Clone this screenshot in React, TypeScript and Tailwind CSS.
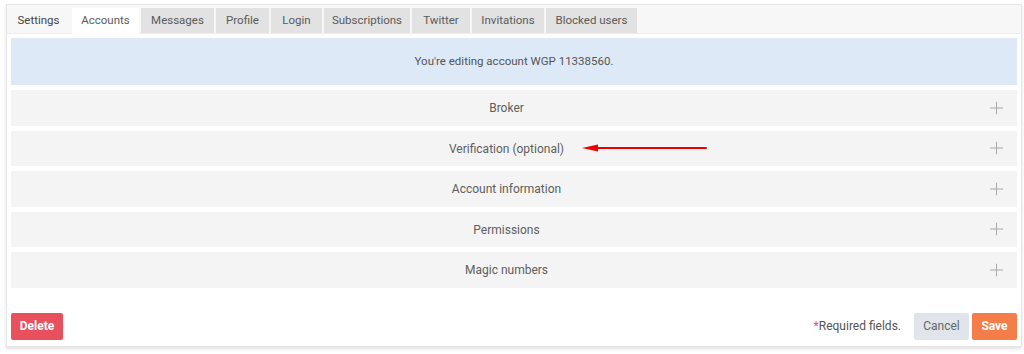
import React from "react";

const tabs = [
  { label: "Settings", kind: "plain", w: "w-[63px]" },
  { label: "Accounts", kind: "active", w: "w-[67px]" },
  { label: "Messages", kind: "gray", w: "w-[73px]" },
  { label: "Profile", kind: "gray", w: "w-[53px]" },
  { label: "Login", kind: "gray", w: "w-[51px]" },
  { label: "Subscriptions", kind: "gray", w: "w-[86px]" },
  { label: "Twitter", kind: "gray", w: "w-[58px]" },
  { label: "Invitations", kind: "gray", w: "w-[72px]" },
  { label: "Blocked users", kind: "gray", w: "w-[91px]" },
];

const rows = ["Broker", "Verification (optional)", "Account information", "Permissions", "Magic numbers"];

function Plus() {
  return (
    <svg width="13" height="13" viewBox="0 0 13 13" className="block">
      <path d="M6.5 0V13M0 6.5H13" stroke="#a8a8a8" strokeWidth="1" fill="none" />
    </svg>
  );
}

export default function App() {
  return (
    <div className="w-[1024px] h-[354px] bg-white pt-[4px] pl-[6px]" style={{ fontFamily: "Roboto, 'Liberation Sans', sans-serif" }}>
      <div className="w-[1016px] border border-[#e6e6e6] bg-white shadow-[0_2px_3px_rgba(0,0,0,0.12)]">
        <div className="flex items-end gap-[2px] h-[29px] bg-[#f7f7f7] border-b border-[#ececec]">
          {tabs.map((t) => (
            <div
              key={t.label}
              className={
                t.w +
                " h-[25px] flex items-center justify-center text-[11.5px] " +
                (t.kind === "active"
                  ? "bg-white text-[#5a5a5a] -mb-px h-[26px]"
                  : t.kind === "gray"
                  ? "bg-[#e2e2e2] text-[#5a5a5a]"
                  : "text-[#444]")
              }
            >
              {t.label}
            </div>
          ))}
        </div>
        <div className="px-[4px] pt-[4px]">
          <div className="h-[47px] bg-[#dde9f7] flex items-center justify-center text-[11.5px] text-[#555]">
            You're editing account WGP 11338560.
          </div>
          <div className="flex flex-col gap-[5px] mt-[5px]">
            {rows.map((r, i) => (
              <div key={r} className="relative h-[35.5px] bg-[#f4f4f4] flex items-center justify-center pr-[15px] pt-[1px] text-[12px] text-[#5e5e5e]">
                <span>{r}</span>
                <div className="absolute right-[14px] top-1/2 -translate-y-1/2">
                  <Plus />
                </div>
                {i === 1 && (
                  <svg className="absolute left-[571px] top-1/2 -translate-y-1/2" width="126" height="10" viewBox="0 0 126 10">
                    <path d="M14 5H124" stroke="#ee0000" strokeWidth="2" strokeLinecap="round" />
                    <path d="M0 5L16 1.5V8.5Z" fill="#ee0000" />
                  </svg>
                )}
              </div>
            ))}
          </div>
          <div className="flex items-center justify-between mt-[25px] pb-[6px]">
            <button className="h-[27px] w-[52px] rounded-[2px] bg-[#e9505d] text-white text-[12px] font-bold">Delete</button>
            <div className="flex items-center">
              <span className="text-[12px] text-[#555] mr-[13px]">
                <span className="text-[#e9505d]">*</span>Required fields.
              </span>
              <button className="h-[27px] w-[55px] rounded-[2px] bg-[#e0e5eb] text-[#666] text-[12px]">Cancel</button>
              <button className="ml-[3px] h-[27px] w-[45px] rounded-[2px] bg-[#f47d49] text-white text-[12px] font-bold">Save</button>
            </div>
          </div>
        </div>
      </div>
    </div>
  );
}
